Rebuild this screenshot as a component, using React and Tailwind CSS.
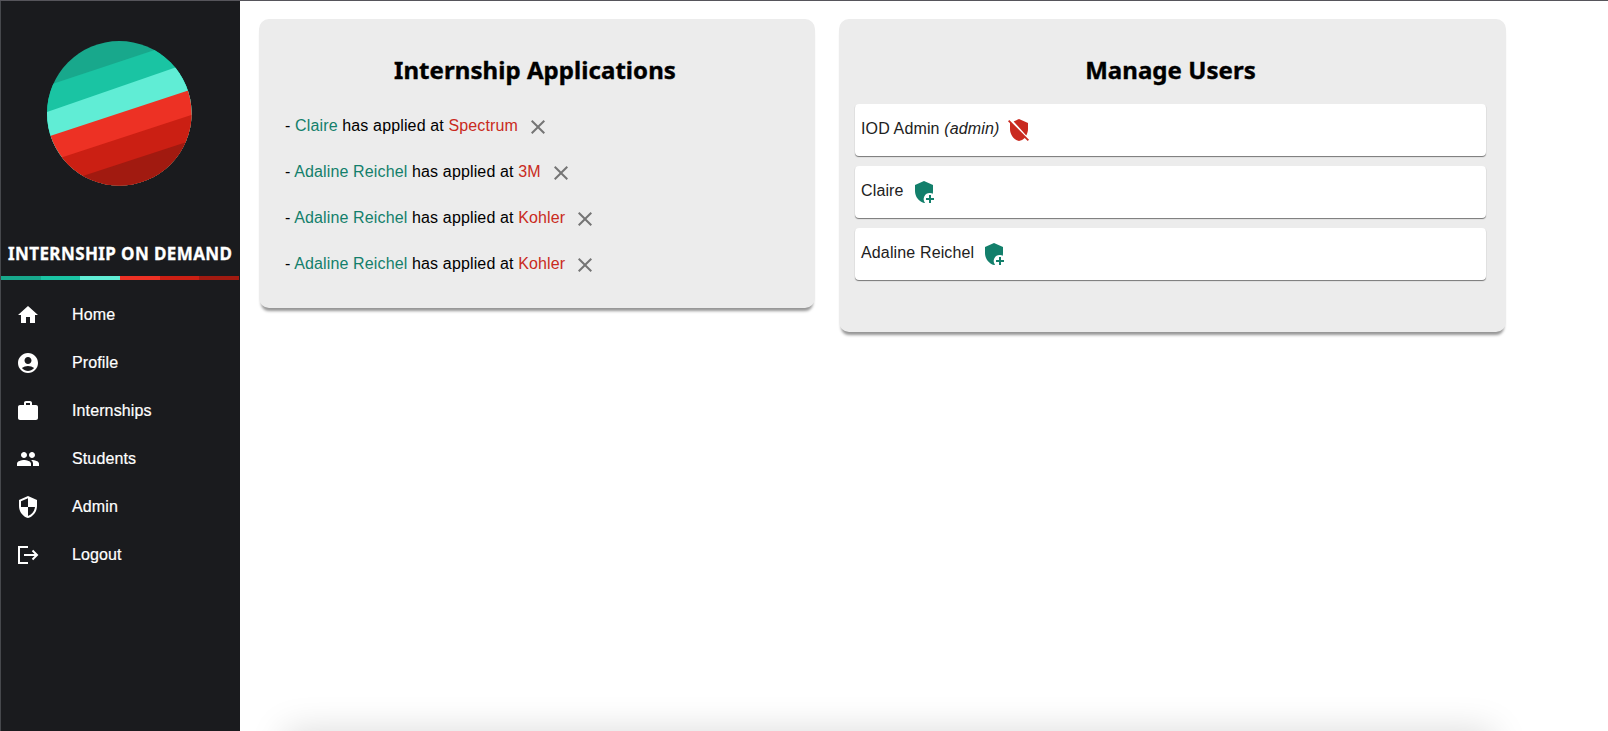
import React from "react";
import { MdHome, MdAccountCircle, MdWork, MdPeople, MdSecurity, MdClose } from "react-icons/md";

const nav = [
  ["Home", MdHome],
  ["Profile", MdAccountCircle],
  ["Internships", MdWork],
  ["Students", MdPeople],
  ["Admin", MdSecurity],
  ["Logout", LogoutIcon],
];

const applications = [
  ["Claire", "Spectrum"],
  ["Adaline Reichel", "3M"],
  ["Adaline Reichel", "Kohler"],
  ["Adaline Reichel", "Kohler"],
];

const users = [
  { name: "IOD Admin", admin: true },
  { name: "Claire" },
  { name: "Adaline Reichel" },
];

function LogoutIcon({ className }) {
  return (
    <svg viewBox="0 0 24 24" className={className} fill="none" stroke="currentColor" strokeWidth="2">
      <path d="M12 4H3v16h9M8 12h13M16.500 7.500 21 12l-4.500 4.500" />
    </svg>
  );
}

function ShieldPlus() {
  return (
    <svg viewBox="0 0 24 24" className="size-6 text-[#137f6b]" fill="currentColor">
      <path d="M12 1 3 5v6c0 5.550 3.840 10.740 9 12 .350-.080.700-.190 1-.300A6 6 0 0 1 18 13c1.050 0 2 .250 2.870.700.090-.890.130-1.800.130-2.700V5l-9-4Z" />
      <path d="M17 15v3h-3v2h3v3h2v-3h3v-2h-3v-3h-2Z" />
    </svg>
  );
}

function ShieldOff() {
  return (
    <svg viewBox="0 0 24 24" className="size-6 text-[#c92a20]" fill="currentColor">
      <path d="M1 3.270 2.280 2 22 21.720 20.730 23l-3-3C16.150 21.500 14.190 22.500 12 23c-5.160-1.260-9-6.450-9-12V5.270l-2-2ZM12 1l9 4v6c0 2.280-.650 4.500-1.770 6.400L6.600 3.400 12 1Z" />
    </svg>
  );
}

function Logo() {
  return (
    <svg viewBox="0 0 240 220" className="h-[220px] w-[240px] shrink-0">
      <defs>
        <clipPath id="disc">
          <circle cx="119.300" cy="113.300" r="72.300" />
        </clipPath>
      </defs>
      <g clipPath="url(#disc)">
        <rect width="240" height="220" fill="#18a88c" />
        <path d="M40 88 200 35V220H40Z" fill="#1ac4a3" />
        <path d="M40 114.300 200 59V220H40Z" fill="#60edd5" />
        <path d="M40 139.300 200 86.500V220H40Z" fill="#ed3124" />
        <path d="M40 164.500 200 112V220H40Z" fill="#cb1f13" />
        <path d="M40 190 200 137.500V220H40Z" fill="#a11a10" />
      </g>
    </svg>
  );
}

function Card({ title, className, children }) {
  return (
    <section className={`rounded-[10px] bg-[#ececec] pt-[33px] shadow-[0_5px_3px_-2px_rgba(0,0,0,0.42)] ${className}`}>
      <h2 className="pr-1 text-center font-['Noto_Sans',sans-serif] text-[24px] leading-9 font-bold tracking-[0.060px] [-webkit-text-stroke:0.4px_black]">
        {title}
      </h2>
      {children}
    </section>
  );
}

export default function App() {
  return (
    <div className="flex h-[731px] overflow-hidden border-t border-[#56555b] bg-white font-['Liberation_Sans',sans-serif] text-base text-black">
      <aside className="flex w-[240px] shrink-0 flex-col border-l border-[#46484c] bg-[#1a1b1e] text-white">
        <div className="-mt-px -ml-px">
          <Logo />
        </div>
        <h1 className="mt-[22px] h-[34px] pl-[7px] font-['Noto_Sans',sans-serif] text-[17px] leading-6 font-bold tracking-[0.4px] whitespace-nowrap [-webkit-text-stroke:0.3px_white]">
          INTERNSHIP ON DEMAND
        </h1>
        <div className="mr-px flex h-1">
          <span className="flex-1 bg-[#18a88c]" />
          <span className="flex-1 bg-[#1ac4a3]" />
          <span className="flex-1 bg-[#60edd5]" />
          <span className="flex-1 bg-[#ed3124]" />
          <span className="flex-1 bg-[#cb1f13]" />
          <span className="flex-1 bg-[#a11a10]" />
        </div>
        <nav className="pt-[11px]">
          {nav.map(([label, Icon]) => (
            <a key={label} className="flex h-12 items-center pl-[15px]">
              <Icon className="size-6" />
              <span className="ml-8 tracking-[0.12px] [-webkit-text-stroke:0.2px_white]">{label}</span>
            </a>
          ))}
        </nav>
      </aside>
      <main className="flex flex-1 flex-col justify-between">
        <div className="flex items-start gap-6 pt-[18px] pl-[19px]">
          <Card title="Internship Applications" className="h-[289px] w-[556px]">
            <ul className="mt-[14px] pl-[26px]">
              {applications.map(([student, company], i) => (
                <li key={i} className="flex h-[46px] items-center">
                  <p className="pt-0.5 tracking-[0.14px] whitespace-pre">
                    - <span className="text-[#137f6b]">{student}</span> has applied at{" "}
                    <span className="text-[#c92a20]">{company}</span>
                  </p>
                  <MdClose className="mt-[3px] ml-2 size-6 text-[#757575]" />
                </li>
              ))}
            </ul>
          </Card>
          <Card title="Manage Users" className="h-[313px] w-[667px]">
            <ul className="mt-4 ml-4 flex w-[631px] flex-col gap-[10px]">
              {users.map(({ name, admin }) => (
                <li
                  key={name}
                  className="flex h-[52px] items-center rounded bg-white pl-1.5 text-[#212121] shadow-[0_1px_1px_rgba(0,0,0,0.5)]"
                >
                  <span className="-mt-[3px] tracking-[0.14px]">
                    {name} {admin && <em>(admin)</em>}
                  </span>
                  <span className="ml-2">{admin ? <ShieldOff /> : <ShieldPlus />}</span>
                </li>
              ))}
            </ul>
          </Card>
        </div>
        <div className="h-[60px] overflow-hidden pr-[115px] pl-[45px]">
          <div className="mt-[60px] h-10 shadow-[0_0_36px_rgba(0,0,0,0.15)]" />
        </div>
      </main>
    </div>
  );
}
